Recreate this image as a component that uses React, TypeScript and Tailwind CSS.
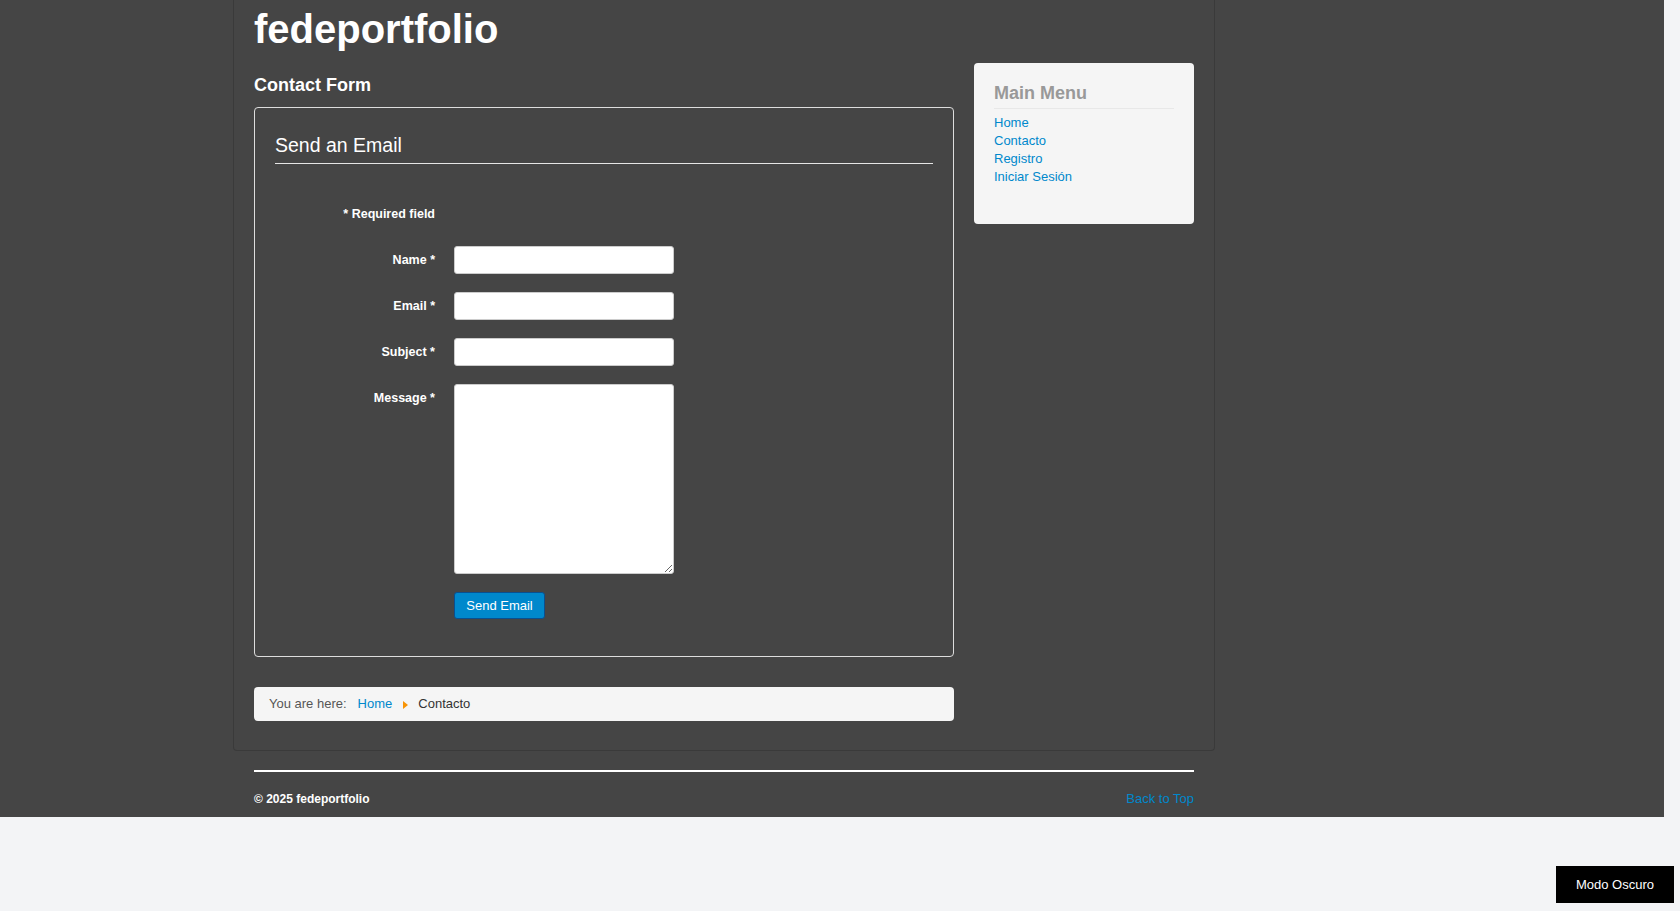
import React from "react";

export default function App() {
  const font = { fontFamily: '"Liberation Sans", Arial, sans-serif' };
  const label = "w-[160px] text-right text-[12.5px] font-bold leading-[18px] pt-[5px] text-white";
  const input = "w-[220px] h-[28px] bg-white border border-[#cccccc] rounded-[3px] outline-none";
  return (
    <div className="min-h-screen bg-[#f3f4f6]" style={font}>
      <div className="w-[1664px] bg-[#454545] pb-[9px]">
        <div className="ml-[233px] w-[982px] border border-t-0 border-[#3a3a3a] rounded-b-[4px] px-5 pt-[5px] pb-[29px]">
          <div className="text-[40px] font-bold leading-[48px] text-white">fedeportfolio</div>
          <div className="flex gap-5">
            <main className="w-[700px]">
              <h2 className="mt-[20px] mb-[10px] text-[18px] font-bold leading-[24px] text-white">Contact Form</h2>
              <div className="border border-[#dddddd] rounded-[4px] px-5 pt-5 pb-5">
                <div className="text-[19.5px] leading-[35px] text-white border-b border-[#e5e5e5]">Send an Email</div>
                <div className="mt-[41px] flex">
                  <div className="w-[160px] text-right text-[12.5px] font-bold leading-[18px] text-white">* Required field</div>
                </div>
                <div className="mt-[23px] flex gap-[19px] mb-[18px]">
                  <label className={label}>Name *</label>
                  <input className={input} />
                </div>
                <div className="flex gap-[19px] mb-[18px]">
                  <label className={label}>Email *</label>
                  <input className={input} />
                </div>
                <div className="flex gap-[19px] mb-[18px]">
                  <label className={label}>Subject *</label>
                  <input className={input} />
                </div>
                <div className="flex gap-[19px]">
                  <label className={label}>Message *</label>
                  <textarea className="block w-[220px] h-[190px] bg-white border border-[#cccccc] rounded-[3px] outline-none" />
                </div>
                <div className="flex gap-[19px] mt-[18px] mb-[17px]">
                  <div className="w-[160px]" />
                  <button className="w-[91px] h-[27px] bg-[#0088cc] border border-[#0a4f8f] rounded-[3px] text-white text-[13px] leading-[18px]">Send Email</button>
                </div>
              </div>
              <div className="mt-[30px] bg-[#f5f5f5] rounded-[4px] px-[15px] py-[8px] text-[13px] leading-[18px] flex items-center">
                <span className="text-[#555555] mr-[11px]">You are here:</span>
                <a className="text-[#0088cc] mr-[11px]">Home</a>
                <svg width="5" height="8" viewBox="0 0 5 8" className="mr-[10px] mt-[2px]">
                  <polygon points="0,0 5,4 0,8" fill="#f89406" />
                </svg>
                <span className="text-[#333333]">Contacto</span>
              </div>
            </main>
            <aside className="w-[220px] mt-[10px] self-start bg-[#f5f5f5] rounded-[4px] px-5 pt-5 pb-[38px]">
              <h3 className="text-[18px] font-bold leading-[20px] text-[#999999] pb-[5px] border-b border-[#e8e8e8]">Main Menu</h3>
              <ul className="mt-[5px] text-[13px] leading-[18px] text-[#0088cc]">
                <li>Home</li>
                <li>Contacto</li>
                <li>Registro</li>
                <li>Iniciar Sesión</li>
              </ul>
            </aside>
          </div>
        </div>
        <footer className="ml-[254px] w-[940px] mt-[19px]">
          <div className="h-[2px] bg-white" />
          <div className="mt-[18px] flex justify-between leading-[18px]">
            <span className="text-[12px] font-bold text-white">© 2025 fedeportfolio</span>
            <a className="text-[13px] text-[#0088cc]">Back to Top</a>
          </div>
        </footer>
      </div>
      <button className="fixed right-[6px] bottom-[8px] w-[118px] h-[37px] bg-black text-white text-[13px]">Modo Oscuro</button>
    </div>
  );
}
